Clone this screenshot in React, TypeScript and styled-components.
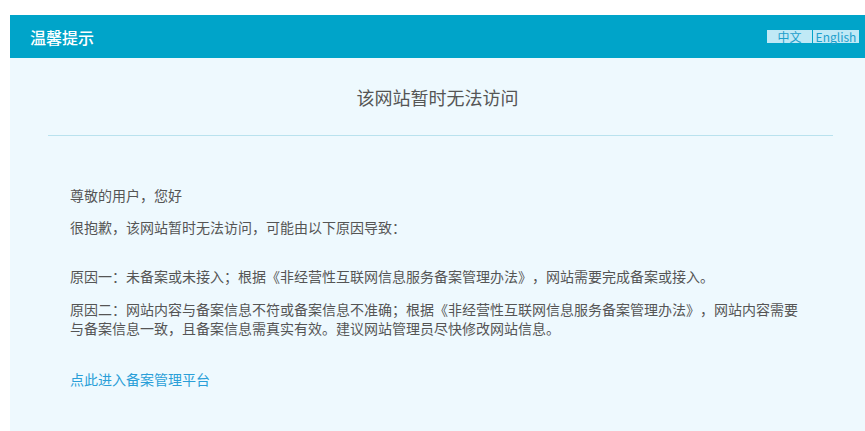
import styled, { createGlobalStyle } from 'styled-components';

const GlobalStyle = createGlobalStyle`
  html, body {
    margin: 0;
    padding: 0;
    background: #ffffff;
    overflow: hidden;
  }
  body {
    font-family: "Noto Sans CJK SC", "Noto Sans", sans-serif;
    text-spacing-trim: space-all;
  }
`;

const Page = styled.div`
  margin: 15px 0 0 10px;
  width: 855px;
`;

const Header = styled.div`
  height: 43px;
  background: #00a4c9;
  display: flex;
  align-items: center;
  justify-content: space-between;
  padding: 0 6px 0 20px;
`;

const HeaderTitle = styled.h1`
  margin: 0;
  font-size: 16px;
  font-weight: 500;
  color: #ffffff;
  line-height: 20px;
`;

const LangSwitch = styled.div`
  display: flex;
  gap: 1px;
`;

const LangButton = styled.a<{ $width: number }>`
  display: block;
  width: ${({ $width }) => $width}px;
  height: 13px;
  line-height: 13px;
  background: #c0e9f6;
  color: #1c9fcc;
  font-size: 12px;
  text-align: center;
  text-decoration: none;
  cursor: pointer;
`;

const Content = styled.div`
  background: #eef9fe;
  height: 349px;
  padding-top: 24px;
`;

const Title = styled.h2`
  margin: 0;
  font-size: 18px;
  font-weight: normal;
  color: #555555;
  line-height: 30px;
  text-align: center;
`;

const Divider = styled.hr`
  border: 0;
  height: 1px;
  background: #b9e2ee;
  margin: 23px 32px 0 38px;
`;

const Body = styled.div`
  padding: 50px 0 0 60px;
  width: 740px;
  display: flex;
  flex-direction: column;
  gap: 30px;
`;

const Section = styled.div<{ $gap: number }>`
  display: flex;
  flex-direction: column;
  gap: ${({ $gap }) => $gap}px;
`;

const Text = styled.p`
  margin: 0;
  font-size: 14px;
  line-height: 19.5px;
  color: #555555;
`;

const Link = styled.a`
  font-size: 14px;
  line-height: 20px;
  color: #2a9fd8;
  text-decoration: none;
  cursor: pointer;
`;

export default function App() {
  return (
    <>
      <GlobalStyle />
      <Page>
        <Header>
          <HeaderTitle>温馨提示</HeaderTitle>
          <LangSwitch>
            <LangButton $width={45}>中文</LangButton>
            <LangButton $width={46}>English</LangButton>
          </LangSwitch>
        </Header>
        <Content>
          <Title>该网站暂时无法访问</Title>
          <Divider />
          <Body>
            <Section $gap={12}>
              <Text>尊敬的用户，您好</Text>
              <Text>很抱歉，该网站暂时无法访问，可能由以下原因导致：</Text>
            </Section>
            <Section $gap={13}>
              <Text>原因一：未备案或未接入；根据《非经营性互联网信息服务备案管理办法》，网站需要完成备案或接入。</Text>
              <Text>
                原因二：网站内容与备案信息不符或备案信息不准确；根据《非经营性互联网信息服务备案管理办法》，网站内容需要与备案信息一致，且备案信息需真实有效。建议网站管理员尽快修改网站信息。
              </Text>
            </Section>
            <Section $gap={0}>
              <Link>点此进入备案管理平台</Link>
            </Section>
          </Body>
        </Content>
      </Page>
    </>
  );
}
